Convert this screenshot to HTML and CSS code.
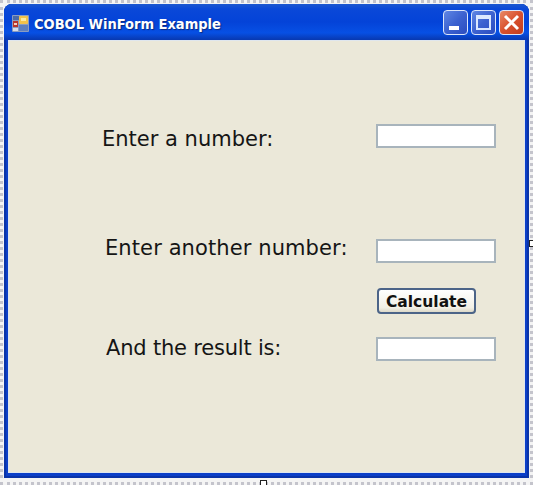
FILE: index.html
```html
<!DOCTYPE html>
<html lang="en">
<head>
  <meta charset="UTF-8" />
  <title>COBOL WinForm Example</title>
  <link rel="stylesheet" href="styles.css">
</head>
<body>
  <div class="window">
    <div class="titlebar">
      <svg class="app-icon" width="17" height="17" viewBox="0 0 17 17">
        <rect x="0" y="0" width="17" height="17" rx="1" fill="#8a9cc0"/>
        <rect x="1" y="1" width="6" height="4" fill="#4a6aa8"/>
        <rect x="7" y="1" width="9" height="8" rx="1" fill="#f2c24a"/>
        <rect x="9" y="3" width="5" height="3" fill="#fbe9a0"/>
        <rect x="1" y="6" width="5" height="6" fill="#b8352a"/>
        <rect x="2" y="8" width="3" height="2" fill="#f4d0c0"/>
        <rect x="7" y="10" width="9" height="6" fill="#5c7fc0"/>
        <rect x="1" y="13" width="5" height="3" fill="#d8dee8"/>
      </svg>
      <span class="title">COBOL WinForm Example</span>
      <div class="controls">
        <div class="ctl ctl-min"><span class="min-bar"></span></div>
        <div class="ctl ctl-max"><span class="max-box"></span></div>
        <div class="ctl ctl-close">
          <svg width="17" height="17" viewBox="0 0 17 17">
            <path d="M2 2 L15 15 M15 2 L2 15" stroke="#fff" stroke-width="3" fill="none"/>
          </svg>
        </div>
      </div>
    </div>
    <div class="form">
      <div class="row row-first">
        <label class="lbl lbl-1">Enter a number:</label>
        <input class="field" type="text" />
      </div>
      <div class="row row-second">
        <label class="lbl lbl-2">Enter another number:</label>
        <input class="field" type="text" />
      </div>
      <div class="btn-row">
        <button class="btn" type="button">Calculate</button>
      </div>
      <div class="row row-third">
        <label class="lbl lbl-3">And the result is:</label>
        <input class="field" type="text" />
      </div>
    </div>
  </div>
  <span class="handle handle-bottom"></span>
  <span class="handle handle-right"></span>
</body>
</html>
```

FILE: styles.css
```css
* {
  box-sizing: border-box;
}

html, body {
  height: 100%;
}

body {
  margin: 0;
  padding: 3px 3px 2px 3px;
  background-color: #f4f4f4;
  border: 3px dotted #c4c4cc;
  font-family: "DejaVu Sans", sans-serif;
  overflow: hidden;
}

.window {
  display: flex;
  flex-direction: column;
  height: 100%;
  margin: -2px;
  margin-bottom: -1px;
  background-color: #0b3fc8;
  border-radius: 8px 8px 0 0;
  padding: 0 4px 5px 4px;
  box-shadow: inset 2px 0 0 #0a34a8, inset -2px 0 0 #0a34a8, inset 0 -2px 0 #0a34a8;
}

.titlebar {
  display: flex;
  align-items: center;
  height: 36px;
  flex-shrink: 0;
  margin: 0 -4px;
  padding: 3px 5px 0 8px;
  border-radius: 8px 8px 0 0;
  background: linear-gradient(to bottom, #1c58d0 0, #0a48d8 14%, #0443d8 50%, #0750e4 80%, #0838b0 100%);
}

.app-icon {
  flex-shrink: 0;
}

.title {
  margin-left: 5px;
  color: #fff;
  font-family: "DejaVu Sans Condensed", "Liberation Sans", sans-serif;
  font-size: 14.5px;
  font-weight: bold;
  text-shadow: 1px 1px 1px #0a2a80;
}

.controls {
  display: flex;
  gap: 3px;
  margin-left: auto;
  margin-top: -3px;
}

.ctl {
  display: flex;
  align-items: center;
  justify-content: center;
  position: relative;
  width: 25px;
  height: 25px;
  border: 1px solid #dbe6fa;
  border-radius: 4px;
  background: linear-gradient(135deg, #5f86e4 0, #3c62d0 50%, #2a4cc0 100%);
}

.ctl-close {
  background: linear-gradient(135deg, #e88a68 0, #d9512e 50%, #c23c1e 100%);
}

.min-bar {
  position: absolute;
  left: 5px;
  bottom: 4px;
  width: 10px;
  height: 4px;
  background-color: #fff;
}

.max-box {
  width: 15px;
  height: 15px;
  border: 2px solid #dbe8ff;
  border-top-width: 4px;
}

.form {
  flex: 1;
  background-color: #ebe8d9;
  border: 1px solid #dfe6ee;
  padding-top: 83px;
  padding-right: 28px;
}

.row {
  display: flex;
  align-items: center;
  justify-content: space-between;
  height: 24px;
}

.row-second {
  margin-top: 91px;
}

.row-third {
  margin-top: 23px;
}

.lbl {
  color: #151515;
  font-size: 21px;
}

.lbl-1 {
  margin-left: 93px;
  margin-top: 5px;
}

.lbl-2 {
  margin-left: 96px;
  margin-bottom: 6px;
  letter-spacing: 0.1px;
}

.lbl-3 {
  margin-left: 97px;
  margin-bottom: 2px;
  letter-spacing: -0.2px;
}

.field {
  width: 120px;
  height: 24px;
  background-color: #fff;
  border: 2px solid #a8b4bc;
}

.btn-row {
  display: flex;
  justify-content: flex-end;
  margin-top: 25px;
  padding-right: 20px;
}

.btn {
  width: 99px;
  height: 26px;
  padding: 2px 0 0 0;
  color: #111;
  font-family: "DejaVu Sans", sans-serif;
  font-size: 15.5px;
  font-weight: bold;
  background: linear-gradient(to bottom, #ffffff, #f2f0e6 80%, #dcd8c8);
  border: 2px solid #4c6488;
  border-radius: 4px;
}

/* designer resize handles poking out of the window edge */
.handle {
  position: absolute;
  background-color: #fff;
  border: 1px solid #222;
}

.handle-bottom {
  left: 260px;
  top: 480px;
  width: 7px;
  height: 7px;
}

.handle-right {
  left: 529px;
  top: 240px;
  width: 7px;
  height: 7px;
}
```
